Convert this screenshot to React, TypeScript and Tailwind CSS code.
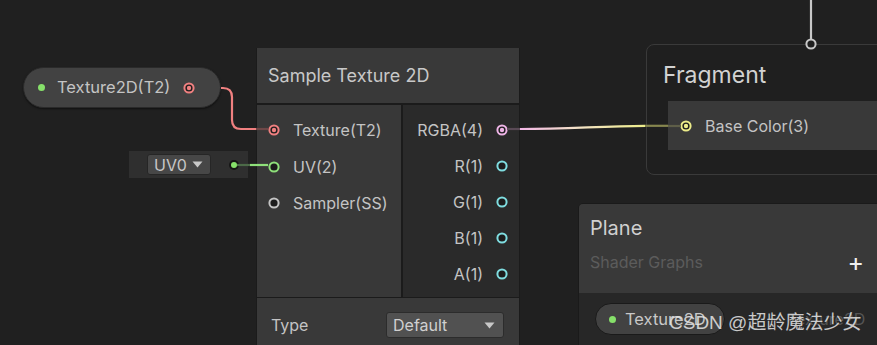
import React from 'react';

const FONT = "font-['Inter','Noto_Sans','Noto_Sans_CJK_SC',sans-serif]";

function Port({ color, filled }: { color: string; filled?: boolean }) {
  return (
    <svg width="12" height="12" viewBox="0 0 12 12" className="shrink-0">
      <circle cx="6" cy="6" r="4.6" fill="#1c1c1c" stroke={color} strokeWidth="2" />
      {filled && <circle cx="6" cy="6" r="2.2" fill={color} />}
    </svg>
  );
}

function Caret() {
  return (
    <svg width="11" height="7" viewBox="0 0 11 7" className="shrink-0">
      <path d="M0.5 0.5 H10.5 L5.5 6.5 Z" fill="#c8c8c8" />
    </svg>
  );
}

const inputs = [
  { label: 'Texture(T2)', color: '#f08080', filled: true },
  { label: 'UV(2)', color: '#8ee07a', filled: false },
  { label: 'Sampler(SS)', color: '#c4c4c4', filled: false },
];

const outputs = [
  { label: 'RGBA(4)', color: '#eeb4e6', filled: true },
  { label: 'R(1)', color: '#7fdde0', filled: false },
  { label: 'G(1)', color: '#7fdde0', filled: false },
  { label: 'B(1)', color: '#7fdde0', filled: false },
  { label: 'A(1)', color: '#7fdde0', filled: false },
];

function Wires() {
  return (
    <svg className="absolute inset-0 pointer-events-none" width="877" height="345" viewBox="0 0 877 345">
      <defs>
        <linearGradient id="py" x1="520" y1="0" x2="645" y2="0" gradientUnits="userSpaceOnUse">
          <stop offset="0" stopColor="#f2b6e6" />
          <stop offset="0.45" stopColor="#f4e2c8" />
          <stop offset="1" stopColor="#ecec8a" />
        </linearGradient>
      </defs>
      {/* texture -> sample texture */}
      <path d="M221 88 H223 Q232 88 232 97 V120 Q232 129 241 129 H256" fill="none" stroke="#f08080" strokeWidth="2.2" />
      <path d="M256 129 H268" fill="none" stroke="#6e4848" strokeWidth="2.2" />
      {/* uv node -> uv input */}
      <path d="M237 165 H250" fill="none" stroke="#4c6a48" strokeWidth="2.2" />
      <path d="M250 165 H268" fill="none" stroke="#8ee07a" strokeWidth="2.2" />
      {/* rgba -> base color */}
      <path d="M507 129 H520" fill="none" stroke="#5a4a56" strokeWidth="2.2" />
      <path d="M520 129 C570 129 600 126 645 125.8" fill="none" stroke="url(#py)" strokeWidth="2.2" />
      <path d="M645 125.8 H668" fill="none" stroke="#86864e" strokeWidth="2.2" />
      <path d="M668 126 H681" fill="none" stroke="#5e5e48" strokeWidth="2.2" />
      {/* top vertex link */}
      <path d="M811 0 V39" fill="none" stroke="#c8c8c8" strokeWidth="2.2" />
    </svg>
  );
}

export default function App() {
  return (
    <div className={`relative w-[877px] h-[345px] overflow-hidden bg-[#202020] text-[#c4c4c4] ${FONT}`}>
      {/* Fragment context */}
      <div className="absolute left-[646px] top-[44px] w-[260px] h-[131px] rounded-[8px] border border-[#3a3a3a] bg-[#1f1f1f]">
        <div className="pl-[16px] pt-[16px] h-[56px] text-[23px] leading-[28px] text-[#d2d2d2]">Fragment</div>
        <div className="ml-[21px] h-[49px] bg-[#393939] flex items-center pl-[12px] gap-[13px]">
          <Port color="#ecec8a" filled />
          <span className="text-[16px]">Base Color(3)</span>
        </div>
      </div>

      {/* Blackboard */}
      <div className="absolute left-[578px] top-[203px] w-[320px] h-[160px] rounded-tl-[5px] border border-[#1a1a1a] bg-[#272727] overflow-hidden">
        <div className="h-[89px] bg-[#393939] px-[11px] pt-[11px] flex flex-col">
          <span className="text-[20px] leading-[26px] text-[#d0d0d0]">Plane</span>
          <div className="flex items-center justify-between mt-[9px] pr-[22px]">
            <span className="text-[16px] leading-[24px] text-[#5c5c5c]">Shader Graphs</span>
            <span className="text-[25px] leading-[24px] text-[#f0f0f0]">+</span>
          </div>
        </div>
        <div className="flex items-center pl-[16px] pt-[10px] gap-[62px]">
          <div className="h-[32px] w-[130px] rounded-full bg-[#424242] border border-[#1a1a1a] flex items-center pl-[13px] gap-[9px]">
            <span className="w-[7px] h-[7px] rounded-full bg-[#86e06a]" />
            <span className="text-[16.5px] text-[#c8c8c8]">Texture2D</span>
          </div>
          <span className="text-[16px] text-[#555555]">Texture2D</span>
        </div>
      </div>

      {/* Texture property node */}
      <div className="absolute left-[23px] top-[67px] w-[198px] h-[41px] rounded-full bg-[#424242] border border-[#2a2a2a] shadow-[0_1px_2px_rgba(0,0,0,0.5)] flex items-center pl-[14px] pr-[25px]">
        <span className="w-[7px] h-[7px] rounded-full bg-[#86e06a]" />
        <span className="ml-[12px] text-[16.5px] text-[#c4c4c4] flex-1">Texture2D(T2)</span>
        <Port color="#f08080" filled />
      </div>

      {/* UV default input */}
      <div className="absolute left-[129px] top-[151px] w-[119px] h-[27px] bg-[#2f2f2f] flex items-center pl-[18px]">
        <div className="h-[21px] w-[64px] rounded-[3px] bg-[#474747] border border-[#262626] flex items-center pl-[6px] gap-[5px]">
          <span className="text-[16px] leading-none text-[#c8c8c8]">UV0</span>
          <Caret />
        </div>
        <span className="ml-[18px] w-[10px] h-[10px] rounded-full bg-[#151515] flex items-center justify-center">
          <span className="w-[6px] h-[6px] rounded-full bg-[#86e06a]" />
        </span>
      </div>

      {/* Sample Texture 2D */}
      <div className="absolute left-[256px] top-[48px] w-[264px] h-[310px] bg-[#1b1b1b] border-x border-[#1b1b1b] flex flex-col">
        <div className="h-[55px] bg-[#393939] flex items-center pl-[11px] text-[18px] text-[#c8c8c8]">Sample Texture 2D</div>
        <div className="h-[192px] mt-[2px] flex gap-[2px]">
          <div className="w-[144px] bg-[#383838] pt-[7px] flex flex-col">
            {inputs.map((p) => (
              <div key={p.label} className="h-[36.5px] flex items-center pl-[11px] gap-[13px]">
                <Port color={p.color} filled={p.filled} />
                <span className="text-[16px] text-[#c4c4c4]">{p.label}</span>
              </div>
            ))}
          </div>
          <div className="flex-1 bg-[#2a2a2a] pt-[7px] flex flex-col">
            {outputs.map((p) => (
              <div key={p.label} className="h-[36px] flex items-center justify-end pr-[11px] gap-[13px]">
                <span className="text-[16px] text-[#c4c4c4]">{p.label}</span>
                <Port color={p.color} filled={p.filled} />
              </div>
            ))}
          </div>
        </div>
        <div className="flex-1 mt-[1px] bg-[#393939] flex items-start justify-between pl-[14px] pr-[15px] pt-[14px]">
          <span className="text-[16px] leading-[26px] text-[#c4c4c4]">Type</span>
          <div className="w-[118px] h-[26px] rounded-[3px] bg-[#515151] border border-[#2c2c2c] flex items-center justify-between pl-[6px] pr-[8px]">
            <span className="text-[16px] text-[#d0d0d0]">Default</span>
            <Caret />
          </div>
        </div>
      </div>

      <Wires />

      {/* vertex port ring above Fragment */}
      <svg className="absolute left-[805px] top-[38px] pointer-events-none" width="12" height="12" viewBox="0 0 12 12">
        <circle cx="6" cy="6" r="4.6" fill="#1f1f1f" stroke="#c8c8c8" strokeWidth="2" />
      </svg>

      {/* watermark */}
      <span className="absolute left-[669px] top-[310px] text-[19px] leading-[26px] text-[#e8e8e8]/85 font-['Liberation_Sans','Noto_Sans_CJK_SC',sans-serif] whitespace-nowrap">
        CSDN @超龄魔法少女
      </span>
    </div>
  );
}
